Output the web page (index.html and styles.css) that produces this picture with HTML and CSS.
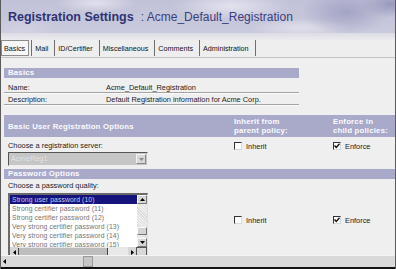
FILE: index.html
```html
<!DOCTYPE html>
<html>
<head>
<meta charset="utf-8">
<link rel="stylesheet" href="styles.css">
</head>
<body>
<header class="hdr"><span class="title">Registration Settings</span><span class="sub">: Acme_Default_Registration</span></header>
<div class="band"></div>
<nav class="tabs">
  <span class="tab active">Basics</span>
  <span class="tab">Mail</span>
  <span class="tab">ID/Certifier</span>
  <span class="tab">Miscellaneous</span>
  <span class="tab">Comments</span>
  <span class="tab">Administration</span>
  <span class="tab end"></span>
</nav>
<main class="content">
  <div class="sec narrow">Basics</div>
  <div class="kv first"><span class="lbl">Name:</span><span>Acme_Default_Registration</span></div>
  <div class="kv"><span class="lbl">Description:</span><span>Default Registration information for Acme Corp.</span></div>

  <div class="sec wide grid">
    <span class="sec-l">Basic User Registration Options</span>
    <span class="sec-r">Inherit from<br>parent policy:</span>
    <span class="sec-r">Enforce in<br>child policies:</span>
  </div>
  <div class="grid opt">
    <div class="left">
      <div class="prompt">Choose a registration server:</div>
      <div class="select"><span class="sel-text">AcmeReg1</span><span class="sel-btn"><svg width="5" height="3" viewBox="0 0 5 3"><path d="M0 0H5L2.5 3Z" fill="#8a8a8a"/></svg></span></div>
    </div>
    <label class="cb top"><span class="box"></span>Inherit</label>
    <label class="cb top"><span class="box"><svg width="6" height="6" viewBox="0 0 6 6"><path d="M0.5 2.5L2.3 4.5L5.5 0.8" stroke="#111" stroke-width="1.4" fill="none"/></svg></span>Enforce</label>
  </div>

  <div class="sec wide bar3">Password Options</div>
  <div class="grid opt">
    <div class="left">
      <div class="prompt p2">Choose a password quality:</div>
      <div class="list">
        <div class="list-body">
          <div class="items">
            <div class="item sel">Strong user password (10)</div>
            <div class="item">Strong certifier password (11)</div>
            <div class="item">Strong certifier password (12)</div>
            <div class="item">Very strong certifier password (13)</div>
            <div class="item">Very strong certifier password (14)</div>
            <div class="item">Very strong certifier password (15)</div>
          </div>
          <div class="vbar">
            <span class="sbtn"><svg width="5" height="3" viewBox="0 0 5 3"><path d="M0 3H5L2.5 0Z" fill="#000"/></svg></span>
            <span class="vtrack"><span class="vthumb"></span></span>
            <span class="sbtn"><svg width="5" height="3" viewBox="0 0 5 3"><path d="M0 0H5L2.5 3Z" fill="#000"/></svg></span>
          </div>
        </div>
        <div class="hbar">
          <span class="hbtn"><svg width="3" height="5" viewBox="0 0 3 5"><path d="M3 0V5L0 2.5Z" fill="#000"/></svg></span>
          <span class="hthumb"></span>
          <span class="htrack"></span>
          <span class="hbtn"><svg width="3" height="5" viewBox="0 0 3 5"><path d="M0 0V5L3 2.5Z" fill="#000"/></svg></span>
          <span class="corner"></span>
        </div>
      </div>
    </div>
    <label class="cb mid"><span class="box"></span>Inherit</label>
    <label class="cb mid"><span class="box"><svg width="6" height="6" viewBox="0 0 6 6"><path d="M0.5 2.5L2.3 4.5L5.5 0.8" stroke="#111" stroke-width="1.4" fill="none"/></svg></span>Enforce</label>
  </div>
</main>
<div class="pagebar">
  <span class="pbtn"><svg width="3" height="5" viewBox="0 0 3 5"><path d="M3 0V5L0 2.5Z" fill="#000"/></svg></span>
  <span class="pthumb"></span>
</div>
</body>
</html>
```
FILE: styles.css
```css
* { box-sizing: border-box; margin: 0; padding: 0; }
html, body { width: 396px; height: 269px; overflow: hidden; }
body {
  background: #efefef;
  font-family: "Liberation Sans", Arial, sans-serif;
  font-size: 7.4px;
  color: #1c1c1c;
  border-left: 1px solid #5a5a5a;
  border-right: 1px solid #5a5a5a;
}
.hdr {
  height: 33px;
  padding: 10px 0 0 7px;
  line-height: 14px;
  display: flex;
  align-items: baseline;
  gap: 7px;
  background:
    radial-gradient(ellipse 40px 10px at 95px 3px, rgba(232,232,242,.8), rgba(232,232,242,0)),
    radial-gradient(ellipse 60px 14px at 230px 6px, rgba(232,232,242,.85), rgba(232,232,242,0)),
    radial-gradient(ellipse 45px 22px at 345px 12px, rgba(155,155,192,.8), rgba(155,155,192,0)),
    radial-gradient(ellipse 30px 14px at 390px 4px, rgba(145,145,185,.85), rgba(145,145,185,0)),
    radial-gradient(ellipse 50px 10px at 300px 28px, rgba(228,228,238,.85), rgba(228,228,238,0)),
    radial-gradient(ellipse 40px 12px at 20px 30px, rgba(215,215,230,.6), rgba(215,215,230,0)),
    linear-gradient(#c1c1d8, #cacadd);
}
.title { font-size: 12.5px; font-weight: bold; color: #2e3374; }
.sub { font-size: 12px; color: #3a3f7e; }
.band { height: 7px; background: linear-gradient(#dcdce5, #ebebee); }
.tabs {
  display: flex;
  height: 18px;
  background: #eeeeee;
  border-bottom: 1px solid #c4c4c4;
  padding-bottom: 1px;
}
.tab {
  display: flex;
  align-items: center;
  padding: 0 4px 0 3px;
  margin-left: 2px;
  border-left: 1px solid #6e6e6e;
  color: #111;
  font-size: 7.2px;
}
.tab.active {
  margin-left: 0;
  padding: 0 3px 0 2px;
  border: 1px solid #8c8c8c;
  background: #f7f7f7;
}
.tab.end { padding: 0; }
.content { padding: 10px 0 0 3px; }
.sec {
  background: #a9a9c9;
  color: #fbfbff;
  font-weight: bold;
  font-size: 7.8px;
  letter-spacing: 0.2px;
}
.narrow { width: 295px; height: 10px; line-height: 10px; padding-left: 4px; }
.kv {
  width: 295px;
  height: 12px;
  padding-top: 2px;
  line-height: 9px;
  display: grid;
  grid-template-columns: 102px 1fr;
  border-bottom: 1px solid #a4a4a4;
  box-shadow: 0 1px 0 #fafafa;
}
.kv.first { height: 15px; padding-top: 5px; }
.lbl { padding-left: 4px; }
.grid { display: grid; grid-template-columns: 229px 99px 1fr; }
.wide { width: 392px; margin-top: 10px; height: 22px; }
.sec-l { align-self: center; padding-left: 4px; padding-top: 1px; }
.sec-r { line-height: 9px; padding-top: 2px; padding-left: 1px; }
.bar3 { margin-top: 3px; height: 10px; line-height: 10px; padding-left: 4px; }
.left { padding-left: 4px; }
.prompt { line-height: 12px; margin-top: 3px; }
.prompt.p2 { margin-top: 2px; line-height: 10px; }
.select {
  width: 140px;
  height: 14px;
  display: flex;
  background: #c6c6c6;
  border-top: 1px solid #555;
  border-left: 1px solid #555;
  border-right: 1px solid #eee;
  border-bottom: 1px solid #eee;
}
.sel-text { flex: 1; color: #ececec; padding-left: 2px; line-height: 12px; text-shadow: 0 0 1px #aaa; }
.sel-btn {
  width: 10px;
  margin: 1px;
  background: #d8d8d8;
  border: 1px solid #f4f4f4;
  border-right-color: #888;
  border-bottom-color: #888;
  display: flex;
  align-items: center;
  justify-content: center;
}
.cb { display: flex; align-items: center; gap: 4px; padding-left: 1px; color: #222; }
.cb.top { align-self: start; margin-top: 3px; height: 12px; }
.cb.mid { align-self: center; margin-top: 4px; }
.box {
  width: 8px;
  height: 8px;
  background: #fff;
  border-top: 1px solid #333;
  border-left: 1px solid #333;
  border-right: 1px solid #d8d8d8;
  border-bottom: 1px solid #d8d8d8;
  display: flex;
  align-items: center;
  justify-content: center;
}
.list {
  margin-top: 2px;
  width: 140px;
  height: 64px;
  background: #fff;
  border-top: 2px solid #6a6a6a;
  border-left: 2px solid #6a6a6a;
  border-right: 1px solid #e0e0e0;
  display: flex;
  flex-direction: column;
  overflow: hidden;
}
.list-body { display: flex; height: 52px; }
.items { flex: 1; overflow: hidden; }
.item { height: 9px; line-height: 9px; padding-left: 2px; color: #747474; white-space: nowrap; font-size: 6.8px; letter-spacing: 0.1px; }
.item.sel { background: #14147c; color: #c8c8ee; }
.vbar { width: 10px; display: flex; flex-direction: column; background: #e6e6e6; }
.sbtn {
  height: 9px;
  background: #d6d6d6;
  border: 1px solid #fafafa;
  border-right-color: #777;
  border-bottom-color: #777;
  display: flex;
  align-items: center;
  justify-content: center;
}
.vtrack { flex: 1; display: flex; flex-direction: column; justify-content: flex-end; padding-bottom: 3px; background: repeating-linear-gradient(45deg, #f0f0f0 0 1px, #dcdcdc 1px 2px); }
.vthumb { height: 8px; background: #d4d4d4; border: 1px solid #fafafa; border-right-color: #777; border-bottom-color: #777; }
.hbar { height: 10px; display: flex; background: #e6e6e6; }
.hbtn {
  width: 8px;
  background: #d6d6d6;
  display: flex;
  align-items: center;
  justify-content: center;
}
.hthumb { width: 90px; margin: 1px 0; background: #bdbdbd; border-left: 1px solid #444; border-right: 1px solid #444; }
.htrack { flex: 1; background: #e8e8e8; }
.corner { width: 11px; background: #d8d8d8; border: 1px solid #555; }
.pagebar {
  position: fixed;
  left: 1px;
  right: 1px;
  bottom: 0;
  height: 14px;
  background: #d9d9d9;
  border-top: 1px solid #f4f4f4;
  border-bottom: 2px solid #111;
  display: flex;
  align-items: center;
}
.pbtn { width: 6px; display: flex; align-items: center; justify-content: center; }
.pthumb { margin-left: 76px; width: 10px; height: 11px; background: #c6c6c6; border: 1px solid #9a9a9a; }
```
